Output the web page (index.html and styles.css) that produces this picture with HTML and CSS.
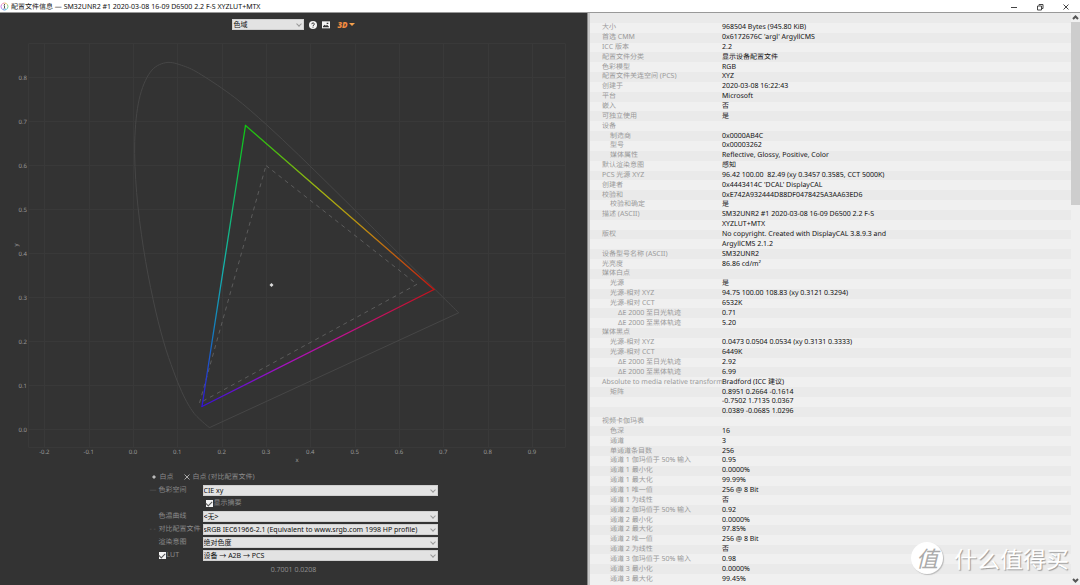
FILE: index.html
```html
<!DOCTYPE html>
<html lang="zh-CN">
<head>
<meta charset="utf-8">
<title>配置文件信息</title>
<link rel="stylesheet" href="styles.css">
</head>
<body>
<div class="window">
  <header class="titlebar">
    <svg class="app-icon" viewBox="0 0 18 18" aria-hidden="true">
      <g fill="none" stroke-width="2">
        <path d="M9 2a7 7 0 0 1 6 3.500" stroke="#e8c860"/>
        <path d="M15 5.500a7 7 0 0 1 0 7" stroke="#7fd08a"/>
        <path d="M15 12.500a7 7 0 0 1-6 3.500" stroke="#4cc4d8"/>
        <path d="M9 16a7 7 0 0 1-6-3.500" stroke="#7a8cf0"/>
        <path d="M3 12.500a7 7 0 0 1 0-7" stroke="#c080e8"/>
        <path d="M3 5.500a7 7 0 0 1 6-3.500" stroke="#f08cb0"/>
      </g>
      <path d="M8 4h2v2H8zM7 7h3v5h1v1H7v-1h1V8H7z" fill="#555"/>
    </svg>
    <h1 class="title">配置文件信息 — SM32UNR2 #1 2020-03-08 16-09 D6500 2.2 F-S XYZLUT+MTX</h1>
    <div class="window-buttons">
      <button type="button" aria-label="最小化"><svg viewBox="0 0 8 8"><path d="M1 4.500h6"/></svg></button>
      <button type="button" aria-label="还原"><svg viewBox="0 0 8 8"><path d="M1.500 3h4v4h-4zM3 2.500V1.500h4v4H6"/></svg></button>
      <button type="button" aria-label="关闭"><svg viewBox="0 0 8 8"><path d="M1.500 1.500l5 5M6.500 1.500l-5 5"/></svg></button>
    </div>
  </header>

  <main class="panes">
    <section class="plot-pane">
      <div class="toolbar">
        <span class="select mode"><select aria-label="图表"><option>色域</option></select></span>
        <button type="button" aria-label="帮助"><svg class="tool" viewBox="0 0 24 24"><circle cx="12" cy="12" r="12" fill="#f4f4f4"/><path d="M8 9.500C8 4.500 16.500 5 16 9.500c-.3 2.500-4 2.500-4 5.500M12 17v3" fill="none" stroke="#333" stroke-width="3"/></svg></button>
        <button type="button" aria-label="保存图像"><svg class="tool" viewBox="0 0 24 24"><path d="M0 1h24v21H0z" fill="#f4f4f4"/><path d="M3 16l5-5 4 3 3-3 6 6v2H3zM14 5h5v4h-5z" fill="#333"/></svg></button>
        <button type="button" class="view3d" aria-label="三维视图"><span class="three-d">3D</span><span class="caret"></span></button>
      </div>

      <svg class="chart" viewBox="0 36 587 434" role="img" aria-label="CIE xy 色域图">
        <defs>
          <linearGradient id="gb" gradientUnits="userSpaceOnUse" x1="245" y1="125" x2="202" y2="407">
            <stop offset="0" stop-color="#10c810"/><stop offset=".25" stop-color="#10b860"/>
            <stop offset=".5" stop-color="#14b4ac"/><stop offset=".75" stop-color="#1478c0"/><stop offset="1" stop-color="#3010d8"/>
          </linearGradient>
          <linearGradient id="gr" gradientUnits="userSpaceOnUse" x1="245" y1="125" x2="434" y2="290">
            <stop offset="0" stop-color="#10c010"/><stop offset=".4" stop-color="#a4b410"/>
            <stop offset=".65" stop-color="#c08810"/><stop offset=".85" stop-color="#c04c10"/><stop offset="1" stop-color="#c81010"/>
          </linearGradient>
          <linearGradient id="br" gradientUnits="userSpaceOnUse" x1="202" y1="407" x2="434" y2="290">
            <stop offset="0" stop-color="#3810d8"/><stop offset=".35" stop-color="#a410c0"/>
            <stop offset=".6" stop-color="#c01090"/><stop offset="1" stop-color="#c81018"/>
          </linearGradient>
        </defs>
        <g id="grid" class="grid"></g>
        <g id="ticks" class="ticks"></g>
        <text class="ticks" x="297" y="462" text-anchor="middle">x</text>
        <text class="ticks" transform="translate(18 245) rotate(-90)" text-anchor="middle">y</text>
        <path id="locus" class="locus"/>
        <path class="reference" d="M266 165.500L417 284.300L199.500 403Z"/>
        <g class="gamut">
          <path d="M434 289.500L202 406.500" stroke="url(#br)"/>
          <path d="M245.500 125.500L434 289.500" stroke="url(#gr)"/>
          <path d="M245.500 125.500L202 406.500" stroke="url(#gb)"/>
        </g>
        <path d="M271.500 283l2 2-2 2-2-2z" fill="#ddd"/>
      </svg>

      <form class="controls">
        <div class="legend">
          <svg viewBox="0 0 8 8" aria-hidden="true"><path d="M4 2l2 2-2 2-2-2z" fill="#bbb"/></svg><span>白点</span>
          <svg class="cross" viewBox="0 0 8 8" aria-hidden="true"><path d="M1.500 1.500l5 5M6.500 1.500l-5 5" stroke="#aaa"/></svg><span>白点 (对比配置文件)</span>
        </div>
        <div class="row">
          <span class="mark">—</span><label for="space">色彩空间</label>
          <span class="select"><select id="space"><option>CIE xy</option></select></span>
        </div>
        <div class="row summary">
          <label class="check"><input type="checkbox" checked>显示摘要</label>
        </div>
        <div class="row">
          <label class="field" for="locus-type">色温曲线</label>
          <span class="select"><select id="locus-type"><option>&lt;无&gt;</option></select></span>
        </div>
        <div class="row">
          <span class="mark">- -</span><label for="compare">对比配置文件</label>
          <span class="select"><select id="compare"><option>sRGB IEC61966-2.1 (Equivalent to www.srgb.com 1998 HP profile)</option></select></span>
        </div>
        <div class="row">
          <label class="field" for="intent">渲染意图</label>
          <span class="select"><select id="intent"><option>绝对色度</option></select></span>
        </div>
        <div class="row">
          <label class="check field"><input type="checkbox" checked>LUT</label>
          <span class="select"><select aria-label="LUT 方向"><option>设备 → A2B → PCS</option></select></span>
        </div>
        <output class="readout">0.7001 0.0208</output>
      </form>
    </section>

    <div class="splitter" role="separator"></div>

    <section class="info-pane">
      <table class="info">
        <tbody>
          <tr><th></th><td></td></tr>
          <tr><th>大小</th><td>968504 Bytes (945.80 KiB)</td></tr>
          <tr><th>首选 CMM</th><td>0x6172676C 'argl' ArgyllCMS</td></tr>
          <tr><th>ICC 版本</th><td>2.2</td></tr>
          <tr><th>配置文件分类</th><td>显示设备配置文件</td></tr>
          <tr><th>色彩模型</th><td>RGB</td></tr>
          <tr><th>配置文件关连空间 (PCS)</th><td>XYZ</td></tr>
          <tr><th>创建于</th><td>2020-03-08 16:22:43</td></tr>
          <tr><th>平台</th><td>Microsoft</td></tr>
          <tr><th>嵌入</th><td>否</td></tr>
          <tr><th>可独立使用</th><td>是</td></tr>
          <tr><th>设备</th><td></td></tr>
          <tr><th class="sub">制造商</th><td>0x0000AB4C</td></tr>
          <tr><th class="sub">型号</th><td>0x00003262</td></tr>
          <tr><th class="sub">媒体属性</th><td>Reflective, Glossy, Positive, Color</td></tr>
          <tr><th>默认渲染意图</th><td>感知</td></tr>
          <tr><th>PCS 光源 XYZ</th><td>96.42 100.00&nbsp; 82.49 (xy 0.3457 0.3585, CCT 5000K)</td></tr>
          <tr><th>创建者</th><td>0x4443414C 'DCAL' DisplayCAL</td></tr>
          <tr><th>校验和</th><td>0xE742A932444D88DF0478425A3AA63ED6</td></tr>
          <tr><th class="sub">校验和确定</th><td>是</td></tr>
          <tr><th>描述 (ASCII)</th><td>SM32UNR2 #1 2020-03-08 16-09 D6500 2.2 F-S</td></tr>
          <tr><th></th><td>XYZLUT+MTX</td></tr>
          <tr><th>版权</th><td>No copyright. Created with DisplayCAL 3.8.9.3 and</td></tr>
          <tr><th></th><td>ArgyllCMS 2.1.2</td></tr>
          <tr><th>设备型号名称 (ASCII)</th><td>SM32UNR2</td></tr>
          <tr><th>光亮度</th><td>86.86 cd/m²</td></tr>
          <tr><th>媒体白点</th><td></td></tr>
          <tr><th class="sub">光源</th><td>是</td></tr>
          <tr><th class="sub">光源-相对 XYZ</th><td>94.75 100.00 108.83 (xy 0.3121 0.3294)</td></tr>
          <tr><th class="sub">光源-相对 CCT</th><td>6532K</td></tr>
          <tr><th class="subsub">ΔE 2000 至日光轨迹</th><td>0.71</td></tr>
          <tr><th class="subsub">ΔE 2000 至黑体轨迹</th><td>5.20</td></tr>
          <tr><th>媒体黑点</th><td></td></tr>
          <tr><th class="sub">光源-相对 XYZ</th><td>0.0473 0.0504 0.0534 (xy 0.3131 0.3333)</td></tr>
          <tr><th class="sub">光源-相对 CCT</th><td>6449K</td></tr>
          <tr><th class="subsub">ΔE 2000 至日光轨迹</th><td>2.92</td></tr>
          <tr><th class="subsub">ΔE 2000 至黑体轨迹</th><td>6.99</td></tr>
          <tr><th>Absolute to media relative transform</th><td>Bradford (ICC 建议)</td></tr>
          <tr><th class="sub">矩阵</th><td>0.8951 0.2664 -0.1614</td></tr>
          <tr><th></th><td>-0.7502 1.7135 0.0367</td></tr>
          <tr><th></th><td>0.0389 -0.0685 1.0296</td></tr>
          <tr><th>视频卡伽玛表</th><td></td></tr>
          <tr><th class="sub">色深</th><td>16</td></tr>
          <tr><th class="sub">通道</th><td>3</td></tr>
          <tr><th class="sub">单通道条目数</th><td>256</td></tr>
          <tr><th class="sub">通道 1 伽玛值于 50% 输入</th><td>0.95</td></tr>
          <tr><th class="sub">通道 1 最小化</th><td>0.0000%</td></tr>
          <tr><th class="sub">通道 1 最大化</th><td>99.99%</td></tr>
          <tr><th class="sub">通道 1 唯一值</th><td>256 @ 8 Bit</td></tr>
          <tr><th class="sub">通道 1 为线性</th><td>否</td></tr>
          <tr><th class="sub">通道 2 伽玛值于 50% 输入</th><td>0.92</td></tr>
          <tr><th class="sub">通道 2 最小化</th><td>0.0000%</td></tr>
          <tr><th class="sub">通道 2 最大化</th><td>97.85%</td></tr>
          <tr><th class="sub">通道 2 唯一值</th><td>256 @ 8 Bit</td></tr>
          <tr><th class="sub">通道 2 为线性</th><td>否</td></tr>
          <tr><th class="sub">通道 3 伽玛值于 50% 输入</th><td>0.98</td></tr>
          <tr><th class="sub">通道 3 最小化</th><td>0.0000%</td></tr>
          <tr><th class="sub">通道 3 最大化</th><td>99.45%</td></tr>
        </tbody>
      </table>
      <div class="scrollbar" aria-hidden="true">
        <svg viewBox="0 0 9 9"><path d="M2 6l2.500-2.500L7 6"/></svg>
        <div class="track"><div class="thumb"></div></div>
        <svg viewBox="0 0 9 9"><path d="M2 3l2.500 2.500L7 3"/></svg>
      </div>
      <div class="watermark"><span class="badge">值</span><span>什么值得买</span></div>
    </section>
  </main>
</div>
<script src="chart.js"></script>
</body>
</html>
```

FILE: styles.css
```css
* { box-sizing: border-box; }

body {
  margin: 0;
  font: 7px/9px "Noto Sans", "Noto Sans CJK SC", sans-serif;
  text-rendering: geometricPrecision;
  color: #111;
  background: #333;
}

button, select, input { font: inherit; color: inherit; margin: 0; padding: 0; border: 0; }
button { background: none; display: flex; align-items: center; }

.window { min-height: 100vh; display: flex; flex-direction: column; }

.titlebar {
  display: flex;
  align-items: center;
  height: 13px;
  padding: 1px 10px 0 0;
  background: #fff;
  border-bottom: 1px solid #999;
}
.app-icon { width: 9px; height: 9px; margin-right: 2px; }
.title { flex: 1; margin: 0; padding-top: 1px; font-size: 7px; font-weight: 400; white-space: nowrap; }
.window-buttons { display: flex; gap: 18px; }
.window-buttons svg { width: 8px; height: 8px; fill: none; stroke: #444; display: block; }

.panes { flex: 1; display: flex; }

.plot-pane { flex: 587; min-width: 0; background: #333; color: #8c8c8c; }
.toolbar { display: flex; justify-content: center; align-items: center; gap: 5px; height: 23px; }
.tool { width: 8px; height: 8px; display: block; }
.view3d { gap: 1px; margin-left: 2px; }
.three-d { font: italic 800 8px/9px "Open Sans", sans-serif; color: #f08a40; }
.caret { border: 3px solid transparent; border-top-color: #f5a04c; border-bottom: 0; }

.select { position: relative; display: block; flex: 1; }
.select select {
  display: block;
  width: 100%;
  height: 11px;
  padding: 0 10px 0 0;
  appearance: none;
  border-radius: 0;
  border: 1px solid #d0d0d0;
  background: #e3e3e3;
  color: #111;
  line-height: 9px;
}
.select::after {
  content: "";
  position: absolute;
  right: 3px;
  top: 3px;
  width: 3px;
  height: 3px;
  border: solid #999;
  border-width: 0 1px 1px 0;
  transform: rotate(45deg);
  pointer-events: none;
}
.mode { flex: 0 0 72px; }

.chart { display: block; width: 100%; height: auto; }
.grid { fill: none; stroke: #393939; }
.ticks { fill: #999; font-size: 6px; }
.locus { fill: none; stroke: #464646; }
.reference { fill: none; stroke: #5c5c5c; stroke-dasharray: 4 4; }
.gamut { fill: none; stroke-width: 1.300; stroke-linecap: round; }

.controls { width: 288px; margin: 0 auto; display: flex; flex-direction: column; gap: 2px; }
.legend { display: flex; align-items: center; gap: 2px; height: 13px; padding-top: 1px; }
.legend svg { width: 8px; height: 8px; }
.legend .cross { margin-left: 7px; }
.row { display: grid; grid-template-columns: 9px 44px 1fr; align-items: center; height: 11px; white-space: nowrap; }
.field { grid-column: 2; }
.mark { color: #5c5c5c; }
.summary label { grid-column: 3; padding-left: 3px; }
.check { display: flex; align-items: center; gap: 1px; }
.check input {
  appearance: none;
  width: 7px;
  height: 7px;
  padding-bottom: 2px;
  background: #f4f4f4;
  display: grid;
  place-items: center;
}
.check input:checked::after {
  content: "";
  width: 5px;
  height: 3px;
  border: solid #555;
  border-width: 0 0 1px 1px;
  transform: rotate(-45deg);
}
.readout { text-align: center; height: 14px; line-height: 16px; }

.splitter { width: 3px; background: #c8c8c8; border-left: 1px solid #888; }

.info-pane { flex: 490; min-width: 0; position: relative; display: flex; background: #f0f0f0; }
.info { flex: 1; display: flex; flex-direction: column; padding-bottom: 1px; line-height: 8px; }
.info tbody { flex: 1; display: grid; grid-auto-rows: 1fr; }
.info tr { display: grid; grid-template-columns: 120px 1fr; align-items: center; padding: 1px 0 0 12px; white-space: nowrap; }
.info tr:nth-child(odd) { background: #eaeaea; }
.info th, .info td { padding: 0; font-weight: 400; text-align: left; }
.info th { color: #999; }
.info .sub { padding-left: 8px; }
.info .subsub { padding-left: 16px; }

.scrollbar { width: 9px; display: flex; flex-direction: column; background: #f0f0f0; }
.scrollbar svg { width: 9px; height: 9px; fill: none; stroke: #555; stroke-width: 2; }
.track { flex: 1; }
.thumb { height: 33%; background: #cdcdcd; }

.watermark {
  position: absolute;
  right: 11px;
  bottom: 11px;
  display: flex;
  align-items: center;
  gap: 11px;
  color: #fff;
  font: 400 23px/32px "Noto Sans CJK SC", sans-serif;
  text-shadow: 1px 1px 1px #999;
}
.badge {
  width: 32px;
  height: 32px;
  border-radius: 50%;
  background: #fff;
  box-shadow: 1px 1px 1px #bbb;
  color: #aaa;
  font-size: 22px;
  font-style: italic;
  text-align: center;
  text-shadow: none;
}
```

FILE: chart.js
```javascript
const px = x => 133 + x * 443.3;
const py = y => 429.5 - y * 440;

// CIE 1931 spectral locus, 380 nm to 700 nm
const locus = [
  [.1741,.0050],[.1714,.0051],[.1644,.0109],[.1566,.0177],[.1440,.0297],[.1355,.0399],
  [.1241,.0578],[.1096,.0868],[.0913,.1327],[.0687,.2007],[.0454,.2950],[.0235,.4127],
  [.0082,.5384],[.0039,.6548],[.0139,.7502],[.0389,.8120],[.0743,.8338],[.1142,.8262],
  [.1547,.8059],[.2296,.7543],[.3016,.6923],[.3731,.6245],[.4441,.5547],[.5125,.4866],
  [.5752,.4242],[.6270,.3725],[.6915,.3083],[.7347,.2653]
].map(([x, y]) => [px(x), py(y)]);

let d = `M${locus[0]}`;
for (let i = 0; i < locus.length - 1; i++) {
  const p0 = locus[Math.max(i - 1, 0)];
  const p1 = locus[i];
  const p2 = locus[i + 1];
  const p3 = locus[Math.min(i + 2, locus.length - 1)];
  const a = [0, 1].map(k => p1[k] + (p2[k] - p0[k]) / 6);
  const b = [0, 1].map(k => p2[k] - (p3[k] - p1[k]) / 6);
  d += `C${a} ${b} ${p2}`;
}
document.getElementById("locus").setAttribute("d", d + "Z");

let grid = "M28.5 43.5H565.5V447.5H28.5Z";
let ticks = "";
for (let i = -2; i <= 9; i++) {
  const x = px(i / 10);
  grid += `M${Math.round(x) + .5} 43V447`;
  ticks += `<text x="${x}" y="454" text-anchor="middle">${(i / 10).toFixed(1)}</text>`;
}
for (let i = 0; i <= 8; i++) {
  const y = py(i / 10);
  grid += `M28 ${y}H565`;
  ticks += `<text x="27" y="${y + 2}" text-anchor="end">${(i / 10).toFixed(1)}</text>`;
}
document.getElementById("grid").innerHTML = `<path d="${grid}"/>`;
document.getElementById("ticks").innerHTML = ticks;
```
